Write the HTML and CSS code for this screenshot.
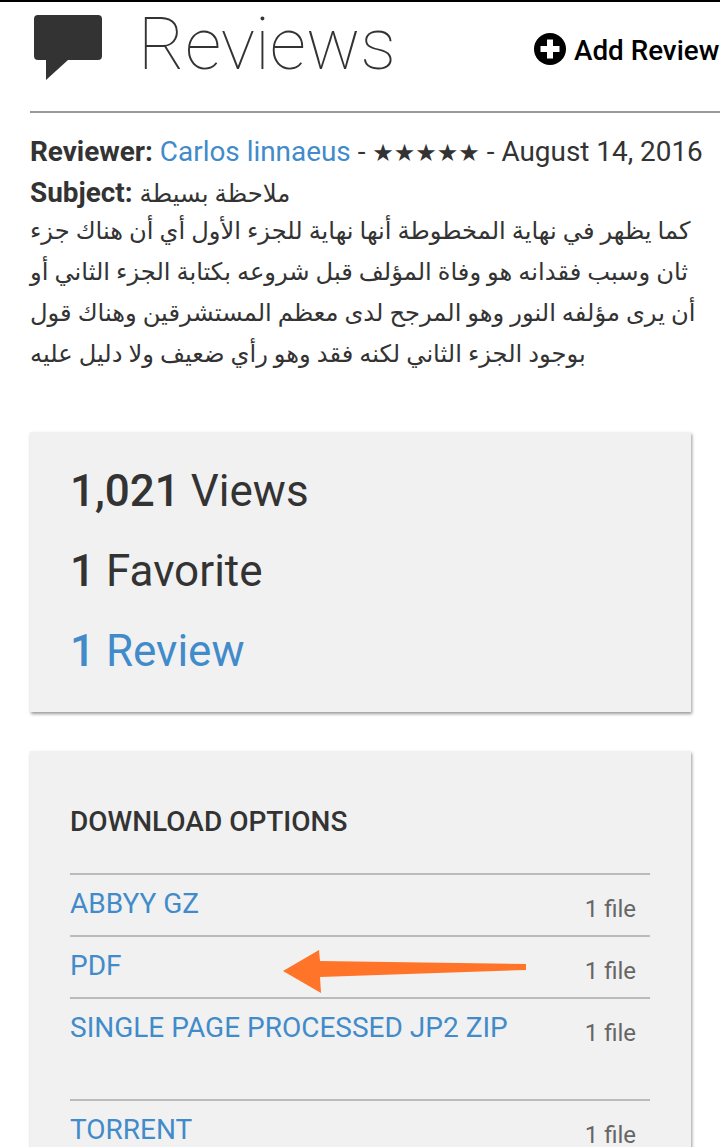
FILE: index.html
```html
<!DOCTYPE html>
<html lang="en">
<head>
<meta charset="utf-8">
<title>Reviews</title>
<link rel="stylesheet" href="styles.css">
</head>
<body>
<div class="page">
  <header class="head">
    <svg class="bubble" viewBox="0 0 68 65" width="68" height="65"><path d="M4 0H64Q68 0 68 4V41Q68 45 64 45H34L12 65V45H4Q0 45 0 41V4Q0 0 4 0Z" fill="#333"/></svg>
    <h1 class="title">Reviews</h1>
    <a class="add">
      <svg class="plus" viewBox="0 0 32 32" width="32" height="32"><circle cx="16" cy="16" r="16" fill="#000"/><path d="M13 6.500H19V13H25.500V19H19V25.500H13V19H6.500V13H13Z" fill="#fff"/></svg>
      <span>Add Review</span>
    </a>
  </header>
  <section class="review">
    <div class="meta"><b>Reviewer:</b> <a class="link">Carlos linnaeus</a> - <span class="stars">★★★★★</span> - August 14, 2016</div>
    <div class="subject"><b>Subject:</b> <span class="ar" dir="rtl">ملاحظة بسيطة</span></div>
    <p class="body" dir="rtl">كما يظهر في نهاية المخطوطة أنها نهاية للجزء الأول أي أن هناك جزء ثان وسبب فقدانه هو وفاة المؤلف قبل شروعه بكتابة الجزء الثاني أو أن يرى مؤلفه النور وهو المرجح لدى معظم المستشرقين وهناك قول بوجود الجزء الثاني لكنه فقد وهو رأي ضعيف ولا دليل عليه</p>
  </section>
  <section class="card stats">
    <div class="stat"><b>1,021</b> Views</div>
    <div class="stat"><b>1</b> Favorite</div>
    <div class="stat link"><b>1</b> Review</div>
  </section>
  <section class="card downloads">
    <h2 class="dl-title">DOWNLOAD OPTIONS</h2>
    <div class="row"><a class="link">ABBYY GZ</a><span class="count">1 file</span></div>
    <div class="row"><a class="link">PDF</a><span class="count">1 file</span>
      <svg class="arrow" viewBox="0 0 244 44" width="244" height="44"><path d="M36 0L37 11L243 14V20L37 27L38 43L0 21Z" fill="#ff7429"/></svg>
    </div>
    <div class="row tall"><a class="link">SINGLE PAGE PROCESSED JP2 ZIP</a><span class="count">1 file</span></div>
    <div class="row"><a class="link">TORRENT</a><span class="count">1 file</span></div>
  </section>
</div>
</body>
</html>
```
FILE: styles.css
```css
html, body {
  margin: 0;
  padding: 0;
  height: 1147px;
  overflow: hidden;
  background: #fff;
}
.page {
  box-sizing: border-box;
  height: 1147px;
  overflow: hidden;
  border-top: 2px solid #000;
  padding: 0 29px 0 30px;
  font-family: Roboto, "DejaVu Sans", sans-serif;
  color: #333;
}
.head {
  display: flex;
  align-items: flex-start;
  height: 109px;
  border-bottom: 2px solid #999;
  margin-right: -29px;
}
.bubble { margin: 13px 0 0 4px; flex: none; }
.title {
  margin: 1px 0 0 36px;
  font-size: 71.800px;
  line-height: 84px;
  font-weight: 100;
  flex: 1;
}
.add {
  display: flex;
  align-items: flex-start;
  gap: 8px;
  margin-top: 31px;
  font-size: 27.800px;
  line-height: 38px;
  font-weight: 500;
  color: #000;
  white-space: nowrap;
}
.plus { flex: none; }
.add span { width: 146px; margin-top: -1px; }
.review { padding-top: 19px; font-size: 27.900px; line-height: 40px; }
.meta, .subject { white-space: nowrap; }
.link { color: #428bca; }
.stars { font-size: 24px; }
.ar { font-size: 24.400px; line-height: 1; }
.body {
  margin: -2px 0 0;
  font-size: 24.200px;
  line-height: 41px;
  width: 666px;
  text-align: left;
}
.card {
  background: #f1f1f1;
  box-shadow: 1px 2px 3px rgba(0,0,0,.4);
  width: 661px;
}
.stats {
  box-sizing: border-box;
  height: 280px;
  margin-top: 57px;
  padding: 34px 40px 0;
}
.stat { font-size: 44px; line-height: 50px; margin-bottom: 30px; }
.stat b { font-weight: 500; }
.downloads {
  margin-top: 39px;
  padding: 53px 41px 0 40px;
  height: 500px;
  box-sizing: border-box;
}
.dl-title {
  margin: 0 0 33px;
  font-size: 28px;
  line-height: 36px;
  font-weight: 500;
}
.row {
  position: relative;
  display: flex;
  justify-content: space-between;
  box-sizing: border-box;
  height: 62px;
  border-top: 2px solid #bbb;
  font-size: 28px;
  line-height: 58px;
}
.tall { height: 102px; }
.count {
  font-size: 24px;
  color: #666;
  margin: 5px 14px 0 0;
}
.arrow { position: absolute; left: 213px; top: 13px; }
```
